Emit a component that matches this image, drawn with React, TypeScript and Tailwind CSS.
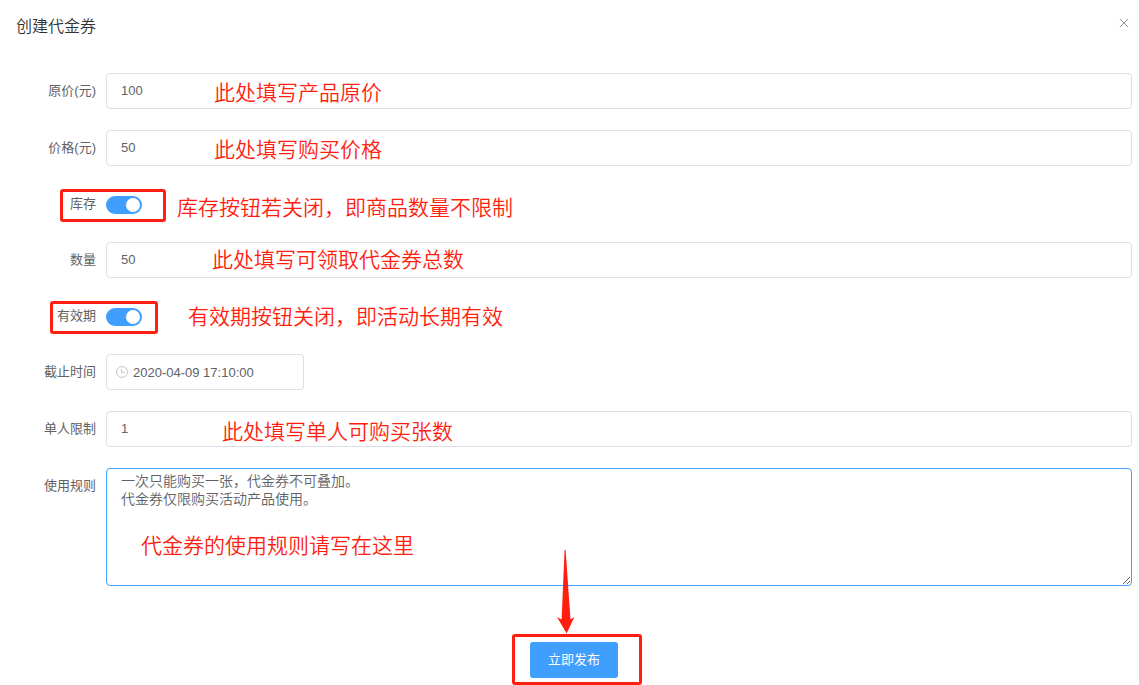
import { useState } from "react";
import type { ReactNode } from "react";

const inputClass =
  "h-9 rounded-[4px] border border-[#dcdfe6] bg-white text-[13px] text-[#606266] outline-none focus:border-[#409eff]";

interface RowProps {
  id: string;
  label: string;
  short?: boolean;
  children: ReactNode;
}

function Row({ id, label, short = false, children }: RowProps) {
  return (
    <div className={`relative flex gap-[10px] ${short ? "h-[34px] items-center" : "items-start"}`}>
      <label
        htmlFor={id}
        className={`w-20 shrink-0 text-right text-[13px] text-[#606266] ${short ? "leading-[34px]" : "leading-9"}`}
      >
        {label}
      </label>
      {children}
    </div>
  );
}

interface NoteProps {
  className: string;
  children: ReactNode;
}

function Note({ className, children }: NoteProps) {
  return (
    <span
      className={`pointer-events-none absolute whitespace-nowrap text-[21px] leading-9 font-[350] text-[#ff1e10] ${className}`}
    >
      {children}
    </span>
  );
}

function Frame({ className }: { className: string }) {
  return (
    <span className={`pointer-events-none absolute rounded-[3px] border-3 border-[#ff1e10] ${className}`} />
  );
}

function TextField({ id, initial }: { id: string; initial: string }) {
  const [value, setValue] = useState(initial);
  return (
    <input
      id={id}
      type="text"
      value={value}
      onChange={(e) => setValue(e.target.value)}
      className={`min-w-0 flex-1 px-[14px] pb-[2px] ${inputClass}`}
    />
  );
}

function Switch({ id }: { id: string }) {
  const [on, setOn] = useState(true);
  return (
    <input
      id={id}
      type="checkbox"
      role="switch"
      checked={on}
      onChange={(e) => setOn(e.target.checked)}
      className="mt-[2px] flex h-[18px] w-9 cursor-pointer appearance-none items-center rounded-full bg-[#dcdfe6] px-[2px] before:size-[14px] before:rounded-full before:bg-white checked:justify-end checked:bg-[#409eff]"
    />
  );
}

function ClockIcon() {
  return (
    <svg
      viewBox="0 0 12 12"
      className="pointer-events-none absolute top-3 left-[10px] size-3"
      fill="none"
      stroke="#c0c4cc"
    >
      <circle cx="6" cy="6" r="5.4" />
      <path d="M5.5 3v3.5H9" />
    </svg>
  );
}

export default function App() {
  const [rules, setRules] = useState(
    "一次只能购买一张，代金券不可叠加。\n代金券仅限购买活动产品使用。"
  );
  const [deadline, setDeadline] = useState("2020-04-09 17:10:00");

  return (
    <div className="bg-white pb-[7px] font-['Liberation_Sans','Noto_Sans_CJK_SC',sans-serif]">
      <header className="flex items-start justify-between pt-[15px] pr-[10px] pb-[34px] pl-4">
        <h1 className="text-base leading-6 font-[350] text-[#303133]">创建代金券</h1>
        <button type="button" aria-label="关闭" className="cursor-pointer pt-[3px]">
          <svg viewBox="0 0 10 10" className="size-[10px]" fill="none" stroke="#909399">
            <path d="M.8.8l8.4 8.4M9.2.8L.8 9.2" />
          </svg>
        </button>
      </header>

      <form className="flex flex-col gap-[21px] pr-[7px] pl-4" onSubmit={(e) => e.preventDefault()}>
        <Row id="original" label="原价(元)">
          <TextField id="original" initial="100" />
          <Note className="top-[2px] left-[198px]">此处填写产品原价</Note>
        </Row>

        <Row id="price" label="价格(元)">
          <TextField id="price" initial="50" />
          <Note className="top-[2px] left-[198px]">此处填写购买价格</Note>
        </Row>

        <Row id="stock" label="库存" short>
          <Switch id="stock" />
          <Frame className="top-[2px] left-11 h-[33px] w-[106px]" />
          <Note className="top-[3px] left-[161px]">库存按钮若关闭，即商品数量不限制</Note>
        </Row>

        <Row id="amount" label="数量">
          <TextField id="amount" initial="50" />
          <Note className="top-0 left-[196px]">此处填写可领取代金券总数</Note>
        </Row>

        <Row id="validity" label="有效期" short>
          <Switch id="validity" />
          <Frame className="top-[2px] left-[34px] h-[33px] w-[108px]" />
          <Note className="top-0 left-[172px]">有效期按钮关闭，即活动长期有效</Note>
        </Row>

        <Row id="deadline" label="截止时间">
          <div className="relative">
            <ClockIcon />
            <input
              id="deadline"
              type="text"
              value={deadline}
              onChange={(e) => setDeadline(e.target.value)}
              className={`block w-[198px] pr-3 pl-[26px] ${inputClass}`}
            />
          </div>
        </Row>

        <Row id="limit" label="单人限制">
          <TextField id="limit" initial="1" />
          <Note className="top-[3px] left-[206px]">此处填写单人可购买张数</Note>
        </Row>

        <Row id="rules" label="使用规则">
          <textarea
            id="rules"
            value={rules}
            onChange={(e) => setRules(e.target.value)}
            className="block h-[118px] min-w-0 flex-1 resize-y rounded-[4px] border border-[#409eff] bg-white px-[14px] py-[3px] text-sm leading-[18px] font-[350] text-[#606266] outline-none"
          />
          <Note className="top-[60px] left-[125px]">代金券的使用规则请写在这里</Note>
        </Row>

        <div className="flex justify-center pt-[35px]">
          <div className="relative">
            <button
              type="submit"
              className="block h-9 w-[88px] cursor-pointer rounded-[3px] bg-[#409eff] text-[13px] text-white"
            >
              立即发布
            </button>
            <Frame className="-top-2 -left-[18px] h-[51px] w-[130px]" />
            <svg
              viewBox="0 0 18 84"
              className="pointer-events-none absolute -top-[92px] left-[27px] h-[84px] w-[18px]"
              fill="#ff1e10"
            >
              <path d="M7.6 0h1l4.9 69.5 3.9-2.6L9.6 83.5 0 66.9l4.6 2.6z" />
            </svg>
          </div>
        </div>
      </form>
    </div>
  );
}
